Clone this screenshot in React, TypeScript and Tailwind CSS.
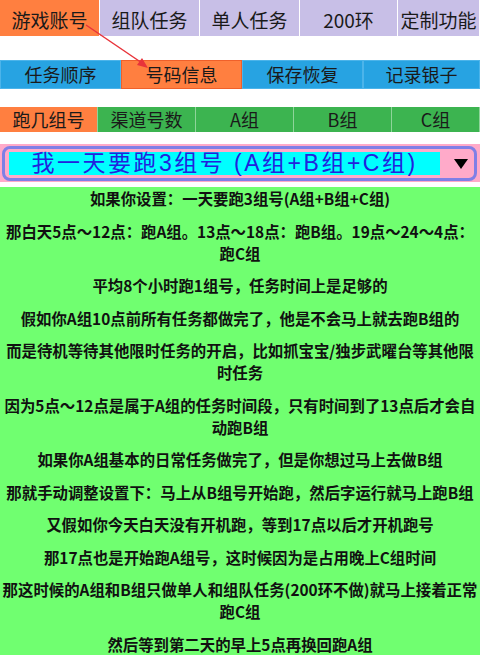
import React from 'react';

const font = { fontFamily: '"Noto Sans CJK SC", "Noto Sans", sans-serif' };
const selectFont = { fontFamily: '"Liberation Sans", "Noto Sans CJK SC", sans-serif' };

const topTabs = [
  { label: '游戏账号', active: true },
  { label: '组队任务' },
  { label: '单人任务' },
  { label: '200环' },
  { label: '定制功能' },
];

const subTabs = [
  { label: '任务顺序' },
  { label: '号码信息', active: true },
  { label: '保存恢复' },
  { label: '记录银子' },
];

const groupTabs = [
  { label: '跑几组号', active: true },
  { label: '渠道号数' },
  { label: 'A组' },
  { label: 'B组' },
  { label: 'C组' },
];

// each paragraph is split where the original wraps
const paragraphs = [
  ['如果你设置：一天要跑3组号(A组+B组+C组)'],
  ['那白天5点～12点：跑A组。13点～18点：跑B组。19点～24～4点：', '跑C组'],
  ['平均8个小时跑1组号，任务时间上是足够的'],
  ['假如你A组10点前所有任务都做完了，他是不会马上就去跑B组的'],
  ['而是待机等待其他限时任务的开启，比如抓宝宝/独步武曜台等其他限', '时任务'],
  ['因为5点～12点是属于A组的任务时间段，只有时间到了13点后才会自', '动跑B组'],
  ['如果你A组基本的日常任务做完了，但是你想过马上去做B组'],
  ['那就手动调整设置下：马上从B组号开始跑，然后字运行就马上跑B组'],
  ['又假如你今天白天没有开机跑，等到17点以后才开机跑号'],
  ['那17点也是开始跑A组号，这时候因为是占用晚上C组时间'],
  ['那这时候的A组和B组只做单人和组队任务(200环不做)就马上接着正常', '跑C组'],
  ['然后等到第二天的早上5点再换回跑A组'],
];

export default function App() {
  return (
    <div className="relative w-[480px] h-[655px] overflow-hidden bg-white text-[#1a1a1a]" style={font}>
      {/* Top tabs */}
      <div className="flex h-[36px] whitespace-nowrap">
        {topTabs.map((t, i) => (
          <div
            key={t.label}
            className={`flex items-center justify-center pt-[5px] text-[19px] border-r border-white ${
              i === 4 ? 'flex-1' : i === 3 ? 'w-[98px]' : 'w-[100px]'
            } ${t.active ? 'bg-[#ff7f40]' : 'bg-[#c8bfe7]'}`}
          >
            {t.label}
          </div>
        ))}
      </div>

      {/* Sub tabs */}
      <div className="flex h-[29px] mt-[24px]">
        {subTabs.map((t, i) => (
          <div
            key={t.label}
            className={`flex items-center justify-center text-[18px] border ${
              i === 3 ? 'flex-1' : 'w-[121px]'
            } ${t.active ? 'bg-[#ff7f40] border-[#f0602a]' : 'bg-[#27a3e2] border-[#4cb4ea]'}`}
          >
            {t.label}
          </div>
        ))}
      </div>

      {/* Group tabs */}
      <div className="flex h-[25px] mt-[18px] whitespace-nowrap">
        {groupTabs.map((t, i) => (
          <div
            key={t.label}
            className={`flex items-center justify-center text-[18px] border-r border-[#8fd49a] ${
              i === 4 ? 'flex-1' : 'w-[98px]'
            } ${t.active ? 'bg-[#ff7f40]' : 'bg-[#3cb450]'}`}
          >
            {t.label}
          </div>
        ))}
      </div>

      {/* Dropdown */}
      <div className="mt-[12px] h-[38px] bg-[#ffaac9] pt-[2px] pl-[2px] pr-[3px]">
        <div className="h-[35px] rounded-[8px] border-[3px] border-[#7f7fe6] flex items-center pl-[4px] pr-[6px]">
          <div className="w-[431px] h-[23px] bg-[#00ffff] flex items-center justify-center">
            <span className="text-[23px] leading-none tracking-[2.5px] text-[#2222dd] whitespace-nowrap" style={selectFont}>
              我一天要跑3组号 (A组+B组+C组)
            </span>
          </div>
          <div className="flex-1 flex justify-end">
            <svg width="14" height="10" viewBox="0 0 14 10">
              <polygon points="0,0 14,0 7,10" fill="#000" />
            </svg>
          </div>
        </div>
      </div>

      {/* Explanation */}
      <div className="mt-[5px] h-[600px] bg-[#70ff70] text-center font-bold text-[15.4px] leading-[22px] text-[#111]">
        {paragraphs.map((lines) => (
          <p key={lines[0]} className="mb-[10.5px]">
            {lines.map((l) => (
              <span key={l} className="block whitespace-nowrap">
                {l}
              </span>
            ))}
          </p>
        ))}
      </div>

      {/* Red arrow overlay */}
      <svg className="absolute left-0 top-0 pointer-events-none" width="480" height="120">
        <line x1="86" y1="25" x2="142" y2="63" stroke="#e8333a" strokeWidth="1.5" />
        <polygon points="148,68 137,65 142,58" fill="#e8333a" />
      </svg>
    </div>
  );
}
